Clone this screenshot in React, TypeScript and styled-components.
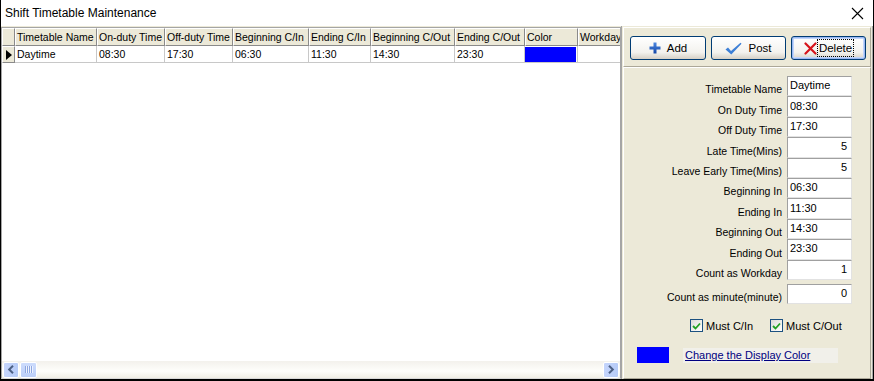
import React from 'react';
import styled, { createGlobalStyle, css } from 'styled-components';

const GlobalStyle = createGlobalStyle`
  html, body {
    margin: 0;
    padding: 0;
    background: #ffffff;
  }
  * {
    box-sizing: border-box;
  }
`;

const Window = styled.div`
  width: 874px;
  height: 381px;
  display: flex;
  flex-direction: column;
  border-left: 1px solid #000;
  border-right: 1px solid #000;
  border-bottom: 2px solid #000;
  background: #ece9d8;
  font-family: 'Liberation Sans', Arial, sans-serif;
  font-size: 10.5px;
  color: #000;
  overflow: hidden;
`;

const TitleBar = styled.div`
  height: 26px;
  flex: none;
  display: flex;
  align-items: center;
  justify-content: space-between;
  padding: 0 9px 0 4px;
  background: #fff;
  font-size: 12px;
`;

const CloseButton = styled.div`
  width: 13px;
  height: 13px;
  display: flex;
  margin-top: 1px;
`;

const Body = styled.div`
  flex: 1;
  display: flex;
  min-height: 0;
`;

const GridFrame = styled.div`
  width: 620px;
  flex: none;
  display: flex;
  flex-direction: column;
  margin-top: 1px;
  border: 1px solid #a5a5a5;
  border-bottom-color: #d8d8d8;
  background: #fff;
`;

const GridView = styled.div`
  flex: 1;
  overflow: hidden;
  background: #fff;
`;

const GridRow = styled.div`
  display: flex;
  width: max-content;
`;

const HeaderCell = styled.div<{ $w: number }>`
  width: ${p => p.$w}px;
  height: 18px;
  flex: none;
  padding: 0 1px;
  display: flex;
  align-items: center;
  white-space: nowrap;
  overflow: hidden;
  background: #ece9d8;
  border-top: 1px solid #fff;
  border-left: 1px solid #fff;
  border-right: 1px solid #8a8a8a;
  border-bottom: 1px solid #8a8a8a;
`;

const Cell = styled.div<{ $w: number; $right?: boolean; $fill?: string }>`
  width: ${p => p.$w}px;
  height: 17px;
  flex: none;
  padding: 0 2px;
  display: flex;
  align-items: center;
  justify-content: ${p => (p.$right ? 'flex-end' : 'flex-start')};
  white-space: nowrap;
  overflow: hidden;
  border-right: 1px solid #c8c8c8;
  border-bottom: 1px solid #c8c8c8;
  ${p =>
    p.$fill &&
    css`
      background: ${p.$fill};
      background-clip: content-box;
      padding: 1px 1px 0 0;
    `}
`;

const IndicatorCell = styled.div<{ $header?: boolean }>`
  width: 13px;
  height: ${p => (p.$header ? 18 : 17)}px;
  flex: none;
  display: flex;
  align-items: center;
  justify-content: center;
  background: #ece9d8;
  border-top: 1px solid #fff;
  border-left: 1px solid #fff;
  border-right: 1px solid #8a8a8a;
  border-bottom: 1px solid #8a8a8a;
`;

const HScroll = styled.div`
  height: 17px;
  flex: none;
  display: flex;
  align-items: center;
  padding: 0 1px;
  background: linear-gradient(to bottom, #f3f1ec, #fefefb 60%, #f1efe6);
`;

const ScrollButton = styled.div`
  width: 16px;
  height: 16px;
  flex: none;
  display: flex;
  align-items: center;
  justify-content: center;
  border: 1px solid #fff;
  border-radius: 2px;
  background: linear-gradient(to right, #c5d5fc, #b6cbf7);
`;

const ScrollThumb = styled.div`
  width: 17px;
  height: 16px;
  flex: none;
  display: flex;
  align-items: center;
  justify-content: center;
  gap: 1px;
  margin-left: 1px;
  border: 1px solid #fff;
  border-radius: 2px;
  background: linear-gradient(to bottom, #cddcfc, #bccff9);
`;

const Grip = styled.span`
  width: 1px;
  height: 7px;
  background: #8ea7e0;
  box-shadow: 1px 0 0 #eef3ff;
`;

const ScrollTrack = styled.div`
  flex: 1;
`;

const SidePanel = styled.div`
  flex: 1;
  display: flex;
  flex-direction: column;
  padding: 1px 1px 0 1px;
  border-left: 1px solid #a5a5a5;
  border-right: 1px solid #a5a5a5;
`;

const Toolbar = styled.div`
  height: 40px;
  flex: none;
  display: flex;
  align-items: flex-start;
  gap: 5px;
  padding: 8px 0 0 6px;
  border: 1px solid #fff;
  border-right-color: #aca899;
  border-bottom-color: #aca899;
`;

const Button = styled.button<{ $w: number; $focused?: boolean }>`
  width: ${p => p.$w}px;
  height: 24px;
  display: flex;
  align-items: center;
  justify-content: center;
  gap: ${p => (p.$focused ? 1 : 6)}px;
  padding: 0;
  font-family: inherit;
  font-size: 11.5px;
  color: #000;
  border: 1px solid #003c74;
  border-radius: 3px;
  background: linear-gradient(to bottom, #ffffff, #f3f2ee 70%, #d6d0c5);
  ${p =>
    p.$focused &&
    css`
      box-shadow: inset 0 0 0 1px #9ab8f2, inset 0 0 0 2px #c2d6fb;
    `}
`;

const FocusLabel = styled.span`
  padding: 2px 1px;
  outline: 1px dotted #000;
`;

const Form = styled.div`
  flex: 1;
  display: flex;
  flex-direction: column;
  padding-top: 8px;
  border: 1px solid #fff;
  border-right-color: #aca899;
  border-bottom-color: #aca899;
`;

const FieldGrid = styled.div`
  display: grid;
  grid-template-columns: 158px 65px;
  column-gap: 5px;
`;

const Label = styled.div<{ $gap?: number }>`
  height: 20.4px;
  margin-top: ${p => p.$gap ?? 0}px;
  display: flex;
  align-items: flex-end;
  justify-content: flex-end;
  padding-bottom: 1px;
  white-space: nowrap;
`;

const Input = styled.div<{ $right?: boolean; $gap?: number }>`
  height: 20.4px;
  margin-top: ${p => p.$gap ?? 0}px;
  display: flex;
  align-items: center;
  justify-content: ${p => (p.$right ? 'flex-end' : 'flex-start')};
  padding: 0 4px 2px 2px;
  background: #fff;
  font-size: 11px;
  border-top: 1px solid #a0a0a0;
  border-left: 1px solid #a0a0a0;
  border-right: 1px solid #e2e2e2;
  border-bottom: 1px solid #e2e2e2;
`;

const CheckRow = styled.div`
  display: flex;
  align-items: center;
  gap: 17px;
  margin-top: 15px;
  padding-left: 66px;
`;

const CheckItem = styled.label`
  display: flex;
  align-items: center;
  gap: 3px;
  font-size: 11px;
`;

const CheckBox = styled.span`
  width: 13px;
  height: 13px;
  display: flex;
  align-items: center;
  justify-content: center;
  border: 1px solid #1c5180;
  background: linear-gradient(135deg, #dcdcd7, #fff);
`;

const ColorRow = styled.div`
  display: flex;
  align-items: center;
  gap: 14px;
  margin-top: 15px;
  padding-left: 13px;
`;

const Swatch = styled.div<{ $color: string }>`
  width: 32px;
  height: 16px;
  background: ${p => p.$color};
`;

const ColorLink = styled.a`
  width: 155px;
  height: 15px;
  display: flex;
  align-items: center;
  padding-left: 2px;
  background: #f1f0ea;
  color: #000080;
  text-decoration: underline;
  font-size: 11px;
  cursor: pointer;
`;

const columns = [
  { title: 'Timetable Name', w: 82 },
  { title: 'On-duty Time', w: 68 },
  { title: 'Off-duty Time', w: 68 },
  { title: 'Beginning C/In', w: 76 },
  { title: 'Ending C/In', w: 62 },
  { title: 'Beginning C/Out', w: 84 },
  { title: 'Ending C/Out', w: 70 },
  { title: 'Color', w: 53 },
  { title: 'Workday', w: 60 },
];

const fields = [
  { label: 'Timetable Name', value: 'Daytime' },
  { label: 'On Duty Time', value: '08:30' },
  { label: 'Off Duty Time', value: '17:30' },
  { label: 'Late Time(Mins)', value: '5', right: true },
  { label: 'Leave Early Time(Mins)', value: '5', right: true },
  { label: 'Beginning In', value: '06:30' },
  { label: 'Ending In', value: '11:30' },
  { label: 'Beginning Out', value: '14:30' },
  { label: 'Ending Out', value: '23:30' },
  { label: 'Count as Workday', value: '1', right: true },
  { label: 'Count as minute(minute)', value: '0', right: true, gap: 4 },
];

const PlusIcon = () => (
  <svg width="12" height="12" viewBox="0 0 12 12">
    <defs>
      <linearGradient id="plusg" x1="0" y1="0" x2="0" y2="1">
        <stop offset="0" stopColor="#4b87e0" />
        <stop offset="1" stopColor="#1447a8" />
      </linearGradient>
    </defs>
    <path d="M4.5 0.5h3v4h4v3h-4v4h-3v-4h-4v-3h4z" fill="url(#plusg)" />
  </svg>
);

const CheckIcon = () => (
  <svg width="17" height="13" viewBox="0 0 17 13">
    <path d="M0.5 7.5 L3 5.5 L6 9 L15.5 0.8 L16.5 1.8 L6.3 12.5 Z" fill="#3d7fd6" />
  </svg>
);

const CrossIcon = () => (
  <svg width="13" height="13" viewBox="0 0 13 13">
    <path d="M1.5 1.5 L11.5 11.5 M11.5 1.5 L1.5 11.5" stroke="#d6141b" strokeWidth="2.2" strokeLinecap="round" />
  </svg>
);

const SmallCheck = () => (
  <svg width="9" height="8" viewBox="0 0 9 8">
    <path d="M1 4 L3.5 6.5 L8 1.5" stroke="#21a121" strokeWidth="1.8" fill="none" />
  </svg>
);

export default function App() {
  return (
    <>
      <GlobalStyle />
      <Window>
        <TitleBar>
          <span>Shift Timetable Maintenance</span>
          <CloseButton>
            <svg width="13" height="13" viewBox="0 0 13 13">
              <path d="M1 1 L12 12 M12 1 L1 12" stroke="#000" strokeWidth="1.1" />
            </svg>
          </CloseButton>
        </TitleBar>
        <Body>
          <GridFrame>
            <GridView>
              <GridRow>
                <IndicatorCell $header />
                {columns.map(c => (
                  <HeaderCell key={c.title} $w={c.w}>
                    {c.title}
                  </HeaderCell>
                ))}
              </GridRow>
              <GridRow>
                <IndicatorCell>
                  <svg width="6" height="10" viewBox="0 0 6 10">
                    <path d="M0 0 L6 5 L0 10 Z" fill="#000" />
                  </svg>
                </IndicatorCell>
                <Cell $w={82}>Daytime</Cell>
                <Cell $w={68}>08:30</Cell>
                <Cell $w={68}>17:30</Cell>
                <Cell $w={76}>06:30</Cell>
                <Cell $w={62}>11:30</Cell>
                <Cell $w={84}>14:30</Cell>
                <Cell $w={70}>23:30</Cell>
                <Cell $w={53} $fill="#0000ff" />
                <Cell $w={60} $right>
                  1
                </Cell>
              </GridRow>
            </GridView>
            <HScroll>
              <ScrollButton>
                <svg width="8" height="9" viewBox="0 0 8 9">
                  <path d="M6 0.8 L2.2 4.5 L6 8.2" stroke="#4d6185" strokeWidth="2" fill="none" />
                </svg>
              </ScrollButton>
              <ScrollThumb>
                <Grip />
                <Grip />
                <Grip />
                <Grip />
              </ScrollThumb>
              <ScrollTrack />
              <ScrollButton>
                <svg width="8" height="9" viewBox="0 0 8 9">
                  <path d="M2 0.8 L5.8 4.5 L2 8.2" stroke="#4d6185" strokeWidth="2" fill="none" />
                </svg>
              </ScrollButton>
            </HScroll>
          </GridFrame>
          <SidePanel>
            <Toolbar>
              <Button $w={76}>
                <PlusIcon />
                Add
              </Button>
              <Button $w={75}>
                <CheckIcon />
                Post
              </Button>
              <Button $w={75} $focused>
                <CrossIcon />
                <FocusLabel>Delete</FocusLabel>
              </Button>
            </Toolbar>
            <Form>
              <FieldGrid>
                {fields.map(f => (
                  <React.Fragment key={f.label}>
                    <Label $gap={f.gap}>{f.label}</Label>
                    <Input $right={f.right} $gap={f.gap}>
                      {f.value}
                    </Input>
                  </React.Fragment>
                ))}
              </FieldGrid>
              <CheckRow>
                <CheckItem>
                  <CheckBox>
                    <SmallCheck />
                  </CheckBox>
                  Must C/In
                </CheckItem>
                <CheckItem>
                  <CheckBox>
                    <SmallCheck />
                  </CheckBox>
                  Must C/Out
                </CheckItem>
              </CheckRow>
              <ColorRow>
                <Swatch $color="#0000ff" />
                <ColorLink>Change the Display Color</ColorLink>
              </ColorRow>
            </Form>
          </SidePanel>
        </Body>
      </Window>
    </>
  );
}
